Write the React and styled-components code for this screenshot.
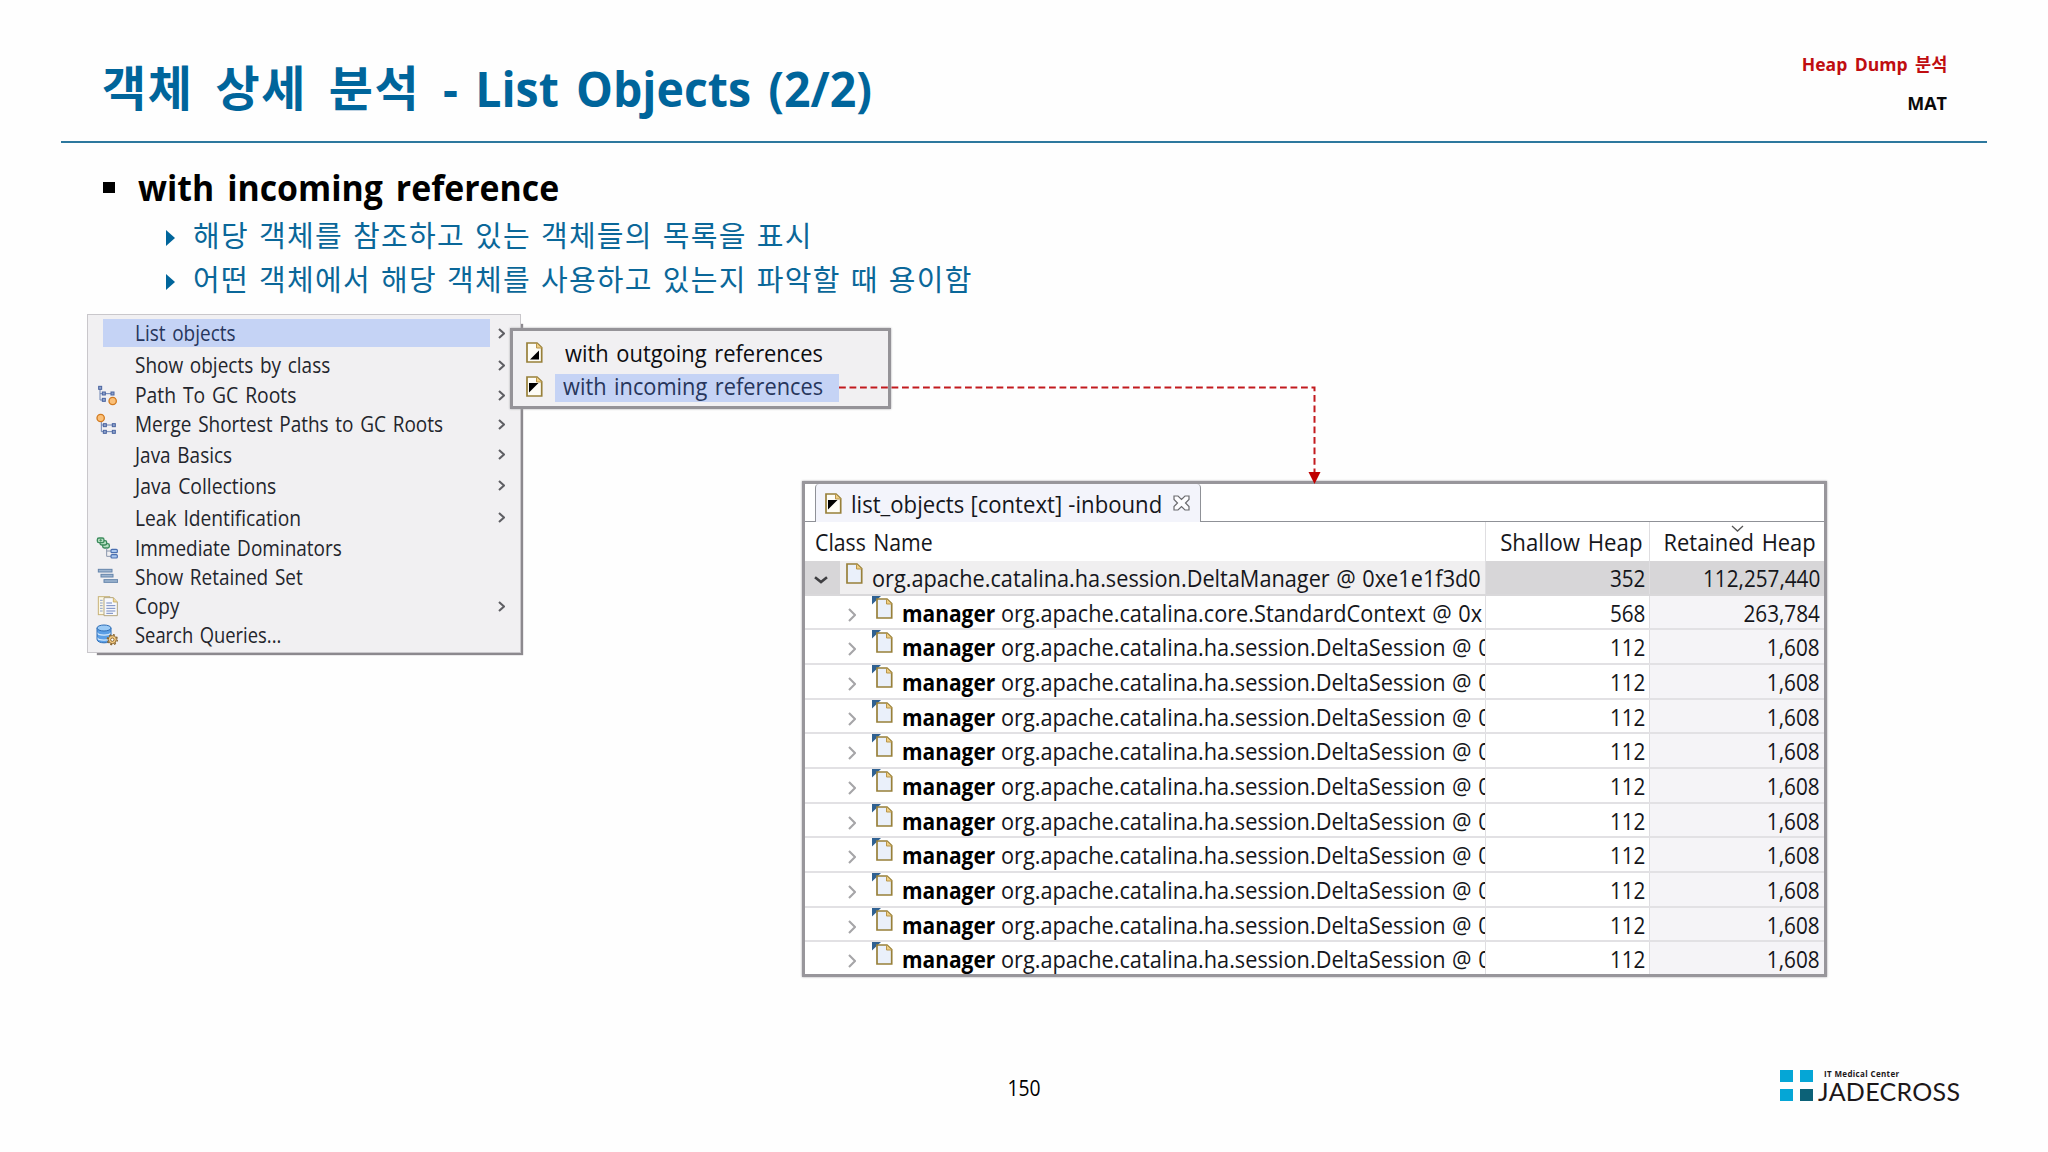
import styled, { createGlobalStyle } from 'styled-components';

const GlobalStyle = createGlobalStyle`
  * {
    box-sizing: border-box;
  }
  body {
    margin: 0;
    background: #fefefe;
    font-family: 'Open Sans', 'Noto Sans CJK KR', sans-serif;
  }
  svg {
    display: block;
    flex-shrink: 0;
  }
`;

// slightly condensed text run, with wider word gaps
const Narrow = styled.span`
  display: inline-block;
  white-space: pre;
  word-spacing: ${({ $gap }) => $gap || 0}px;
  transform: scaleX(${({ $scale }) => $scale});
  transform-origin: ${({ $origin }) => $origin || 'left'} center;
`;

const Slide = styled.main`
  width: 2048px;
  height: 1152px;
  display: flex;
  flex-direction: column;
  overflow: hidden;
  background: #fefefe;
`;

/* ---------- header ---------- */

const Header = styled.header`
  height: 143px;
  margin: 0 61px;
  padding: 45px 40px 0 41px;
  display: flex;
  justify-content: space-between;
  align-items: flex-start;
  border-bottom: 2px solid #2d789e;
`;

const Title = styled.h1`
  margin: 0;
  padding-top: 3px;
  display: flex;
  color: #00659b;
  font-size: 49px;
  font-weight: 700;
  line-height: 80px;
  white-space: pre;
`;

const TitleKorean = styled.span`
  margin-right: 1px;
  font-size: 48px;
  letter-spacing: 1.6px;
  word-spacing: 7.8px;
`;

const Tags = styled.div`
  text-align: right;
  font-size: 18px;
  font-weight: 700;
  line-height: 39px;
`;

const Tag = styled.div`
  color: ${({ $color }) => $color};
`;

/* ---------- bullets ---------- */

const Bullets = styled.section`
  padding: 19px 0 0 103px;
`;

const Heading = styled.h2`
  margin: 0;
  height: 51px;
  display: flex;
  align-items: center;
  gap: 23px;
  font-size: 36px;
  font-weight: 700;
  line-height: 51px;
  color: #000;
`;

const Square = styled.span`
  width: 12px;
  height: 11px;
  background: #000;
`;

const SubItem = styled.p`
  margin: 0;
  padding: 1px 0 0 63px;
  height: 44px;
  display: flex;
  align-items: center;
  gap: 18px;
  color: #0a6799;
  font-size: 29px;
  line-height: 44px;
  letter-spacing: 1.3px;
  word-spacing: 1.2px;
`;

const Pointer = styled.span`
  margin-top: 5px;
  border-left: 9px solid #00659b;
  border-top: 8.5px solid transparent;
  border-bottom: 8.5px solid transparent;
`;

/* ---------- stage ---------- */

const Stage = styled.section`
  position: relative;
  flex: 0 0 757px;
  padding: 13px 0 0 87px;
  display: flex;
  align-items: flex-start;
`;

const Menu = styled.div`
  position: relative;
  width: 434px;
  height: 339px;
  padding-top: 2px;
  background: #f1f0f2;
  border: 1px solid #c9c7cb;
  box-shadow: 6px 6px 1px -4px #8c898e;
`;

const MenuItem = styled.div`
  height: ${({ $height }) => $height}px;
  display: grid;
  grid-template-columns: 15px 387px 1fr;
  align-items: center;
  color: #23252c;
`;

const MenuIcon = styled.div`
  width: 22px;
  padding-left: 8px;
`;

const MenuLabel = styled.div`
  height: 28px;
  padding-left: 32px;
  font-size: 21px;
  line-height: 29px;
  background: ${({ $active }) => ($active ? '#c5d3f5' : 'transparent')};
  color: ${({ $active }) => ($active ? '#27365c' : 'inherit')};
`;

const MenuArrow = styled.div`
  padding-left: 8px;
`;

const Submenu = styled.div`
  position: absolute;
  left: 422px;
  top: 13px;
  width: 381px;
  height: 81px;
  padding: 6px 0 0 13px;
  background: #f1f0f2;
  border: 3px solid #959398;
  box-shadow: 0 0 2px #a9a7ab;
`;

const SubmenuItem = styled.div`
  height: 34px;
  display: flex;
  align-items: center;
  gap: 12px;

  svg {
    margin-bottom: 3px;
  }
`;

const SubmenuLabel = styled.div`
  width: 284px;
  height: 28px;
  padding-left: ${({ $active }) => ($active ? 8 : 10)}px;
  font-size: 23px;
  line-height: ${({ $active }) => ($active ? 24 : 26)}px;
  background: ${({ $active }) => ($active ? '#c5d3f5' : 'transparent')};
  color: ${({ $active }) => ($active ? '#27365c' : '#0c0c10')};
`;

const Connector = styled.svg`
  position: absolute;
  left: 839px;
  top: 79px;
`;

/* ---------- result window ---------- */

const Window = styled.div`
  width: 1025px;
  height: 496px;
  margin: 167px 0 0 281px;
  overflow: hidden;
  background: #fff;
  border: 3px solid #98969b;
  box-shadow: 0 0 2px #a5a3a8;
  color: #15161b;
  font-size: 23px;
`;

const TabBar = styled.div`
  height: 38px;
  display: flex;

  &::before {
    content: '';
    width: 10px;
    border-bottom: 1px solid #8f9197;
  }

  &::after {
    content: '';
    flex: 1;
    border-bottom: 1px solid #8f9197;
  }
`;

const Tab = styled.div`
  width: 386px;
  padding-left: 9px;
  display: flex;
  align-items: center;
  background: #f3f4fb;
  border: 1px solid #8f9197;
  border-width: 0 1px;
  border-radius: 4px 4px 0 0;
`;

const TabText = styled.span`
  width: 331px;
  height: 38px;
  padding-left: 9px;
  line-height: 40px;
`;

const Columns = styled.div`
  display: grid;
  grid-template-columns: 681px 164px 174px;
  grid-template-rows: 100%;
`;

const HeadRow = styled(Columns)`
  height: 39px;
  line-height: 41px;
`;

const HeadCell = styled.div`
  position: relative;
  padding: 0 ${({ $right }) => $right || 0}px 0 ${({ $left }) => $left || 0}px;
  text-align: ${({ $right }) => ($right ? 'right' : 'left')};
  border-right: ${({ $last }) => ($last ? 0 : 1)}px solid #dfdee1;
`;

const SortMark = styled.svg`
  position: absolute;
  left: 81px;
  top: 3px;
`;

const Row = styled(Columns)`
  height: 34.67px;
  line-height: 34px;
  border-bottom: 2px solid ${({ $selected }) => ($selected ? '#d9d8da' : '#e2e1e4')};
  background: ${({ $selected }) => ($selected ? '#d7d6d8' : '#fff')};
`;

const NameCell = styled.div`
  display: flex;
  min-width: 0;
  overflow: hidden;
  white-space: nowrap;
  border-right: 1px solid #dfdee1;
  background: ${({ $selected }) => ($selected ? '#f0eff0' : '#fff')};
`;

const Twistie = styled.div`
  flex: 0 0 ${({ $open }) => ($open ? 35 : 67)}px;
  padding: ${({ $open }) => ($open ? '15px 0 0 9px' : '12px 0 0 43px')};
  background: ${({ $open }) => ($open ? '#d7d6d8' : 'transparent')};
`;

const RowIcon = styled.div`
  padding: ${({ $root }) => ($root ? '2px 9px 0 6px' : '0 9px 0 0')};
`;

const FieldName = styled.b`
  width: 99px;
  flex-shrink: 0;
  color: #000;
`;

const NumberCell = styled.div`
  padding-right: 4px;
  text-align: right;
  border-right: ${({ $retained }) => ($retained ? 0 : 1)}px solid #dfdee1;
  background: ${({ $retained, $selected }) => ($retained && !$selected ? '#f5f4f7' : 'transparent')};
`;

/* ---------- footer ---------- */

const Footer = styled.footer`
  height: 60px;
  padding: 0 88px;
  display: grid;
  grid-template-columns: 1fr auto 1fr;
  align-items: center;
`;

const PageNumber = styled.span`
  grid-column: 2;
  font-size: 21px;
  line-height: 28px;
  color: #000;
`;

const Logo = styled.div`
  justify-self: end;
  width: 180px;
  height: 36px;
  display: flex;
  gap: 5px;
`;

const LogoText = styled.div`
  display: flex;
  flex-direction: column;
  white-space: nowrap;
  color: #1c1719;
`;

const LogoTagline = styled.span`
  padding-left: 6px;
  font-size: 8px;
  font-weight: 700;
  line-height: 8px;
  letter-spacing: 0.35px;
`;

const LogoName = styled.span`
  font-family: Lato, sans-serif;
  font-size: 25px;
  line-height: 26px;
  letter-spacing: 0.3px;
`;

/* ---------- icons ---------- */

const Node = ({ x, y }) => (
  <rect x={x} y={y} width="9" height="9" fill="#8fa3cc" stroke="#4a64a0" strokeWidth="3" />
);

const PathIcon = () => (
  <svg width="22" height="22" viewBox="0 0 66 66">
    <path d="M12 14V48H24M12 29H48" fill="none" stroke="#6d84b5" strokeWidth="3" />
    <Node x={8} y={7} />
    <Node x={19} y={24} />
    <Node x={45} y={24} />
    <Node x={19} y={43} />
    <circle cx="50" cy="51" r="11" fill="#fbc078" stroke="#d27b22" strokeWidth="4" />
  </svg>
);

const MergeIcon = () => (
  <svg width="22" height="22" viewBox="0 0 66 66">
    <path d="M16 20V56H54M16 36H54" fill="none" stroke="#6d84b5" strokeWidth="3" />
    <Node x={22} y={32} />
    <Node x={49} y={32} />
    <Node x={22} y={52} />
    <Node x={49} y={52} />
    <circle cx="14" cy="15" r="11" fill="#fbc078" stroke="#d27b22" strokeWidth="4" />
  </svg>
);

const DominatorsIcon = () => (
  <svg width="22" height="22" viewBox="0 0 66 66">
    <g fill="#b7e0c2" stroke="#3c8b5c" strokeWidth="4">
      <rect x="20" y="20" width="20" height="13" rx="5" />
      <rect x="12" y="11" width="20" height="13" rx="5" />
      <rect x="4" y="3" width="20" height="14" rx="5" />
    </g>
    <path d="M14 6v8M10 10h8" stroke="#3c8b5c" strokeWidth="2.5" />
    <path d="M32 34V58H48M32 42H48" fill="none" stroke="#8a96ac" strokeWidth="3" />
    <g fill="#a9c6ef" stroke="#4a6fb0" strokeWidth="3.5">
      <rect x="45" y="37" width="19" height="10" rx="3" />
      <rect x="45" y="53" width="19" height="10" rx="3" />
    </g>
  </svg>
);

const RetainedIcon = () => (
  <svg width="22" height="22" viewBox="0 0 66 66">
    <g fill="#9db4cf" stroke="#6484ab" strokeWidth="3">
      <rect x="7" y="10" width="41" height="8" />
      <rect x="15" y="25" width="36" height="8" />
      <rect x="24" y="41" width="41" height="8" />
    </g>
  </svg>
);

const CopyIcon = () => (
  <svg width="22" height="22" viewBox="0 0 66 66">
    <rect x="7" y="5" width="34" height="54" fill="#fbf7e6" stroke="#c8b377" strokeWidth="3" />
    <path d="M12 16h8M12 24h8M12 32h8M12 40h8M12 48h8" stroke="#8fa2c8" strokeWidth="3" />
    <path d="M24 8H52L64 21V62H24Z" fill="#f7f8fd" stroke="#b3a57e" strokeWidth="3" />
    <path d="M52 8V21H64" fill="#efd89a" stroke="#c8a95a" strokeWidth="2.5" />
    <path d="M31 24h17M31 32h27M31 40h27M31 48h27M31 55h20" stroke="#7389c0" strokeWidth="3" />
  </svg>
);

const SearchIcon = () => (
  <svg width="22" height="22" viewBox="0 0 66 66">
    <path d="M3 12V46C3 60 45 60 45 46V12Z" fill="#5b9fe6" />
    <path d="M3 25C6 36 42 36 45 25M3 40C6 51 42 51 45 40" fill="none" stroke="#d5e9fb" strokeWidth="4" />
    <path d="M3 12V46C3 60 45 60 45 46V12" fill="none" stroke="#2f6fb8" strokeWidth="3" />
    <ellipse cx="24" cy="12" rx="21" ry="9" fill="#9ccbf6" stroke="#2f6fb8" strokeWidth="3" />
    <circle cx="49" cy="47" r="15" fill="none" stroke="#8a6630" strokeWidth="4" strokeDasharray="6 5.8" />
    <circle cx="49" cy="47" r="12" fill="#f6cd85" stroke="#8a6630" strokeWidth="3" />
    <circle cx="49" cy="47" r="5" fill="#fff" stroke="#8a6630" strokeWidth="3" />
  </svg>
);

const MARKS = {
  incoming: 'M3 7H12.5L3 16.5Z',
  outgoing: 'M13 8.5V17.5H4Z',
};

const PageIcon = ({ mark }) => (
  <svg width="17" height="21" viewBox="0 0 17 21">
    <path d="M1 1H11L15.7 5.7V20H1Z" fill="#fdfcf6" stroke="#98803a" strokeWidth="1.7" />
    <path d="M10.5 1V6H15.7" fill="#f0cf83" stroke="#b8954a" strokeWidth="1" />
    <path d={MARKS[mark]} fill="#000" />
  </svg>
);

const ObjectIcon = ({ child }) => (
  <svg width={child ? 21 : 17} height={child ? 24 : 21} viewBox={child ? '-4 -2 21 24' : '0 0 17 21'}>
    {child && <path d="M-4 -2H5L-4 6.5Z" fill="#2f6192" />}
    <path d="M1 1H11L15.7 5.7V20H1Z" fill="#eaf0fa" stroke="#98803a" strokeWidth="1.7" />
    <path d="M10.5 1V6H15.7" fill="#f0cf83" stroke="#b8954a" strokeWidth="1" />
  </svg>
);

const CloseIcon = () => (
  <svg width="17" height="16" viewBox="0 0 17 16">
    <path
      d="M1 1H5L8.5 4.5L12 1H16V4.5L12.5 8L16 11.5V15H12L8.5 11.5L5 15H1V11.5L4.5 8L1 4.5Z"
      fill="#fdfdff"
      stroke="#6a6a6e"
      strokeWidth="1.2"
    />
  </svg>
);

const Chevron = ({ width, height, color }) => (
  <svg width={width} height={height} viewBox={`0 0 ${width} ${height}`}>
    <path
      d={`M1 1L${width - 1} ${height / 2}L1 ${height - 1}`}
      fill="none"
      stroke={color}
      strokeWidth="2.1"
    />
  </svg>
);

const DownChevron = () => (
  <svg width="14" height="8" viewBox="0 0 14 8">
    <path d="M1 1.2L7 6L13 1.2" fill="none" stroke="#3f3f42" strokeWidth="2.6" />
  </svg>
);

const LogoMark = () => (
  <svg width="33" height="36" viewBox="0 0 33 36">
    <rect x="0" y="0" width="13" height="12" fill="#05a6d6" />
    <rect x="20" y="0" width="13" height="12" fill="#05a6d6" />
    <rect x="0" y="19" width="13" height="12" fill="#05a6d6" />
    <rect x="20" y="19" width="13" height="12" fill="#0c6177" />
  </svg>
);

/* ---------- data ---------- */

const menuItems = [
  { label: 'List objects', height: 32, arrow: true, active: true },
  { label: 'Show objects by class', height: 32, arrow: true },
  { label: 'Path To GC Roots', height: 28, arrow: true, icon: <PathIcon />, scale: 0.92 },
  { label: 'Merge Shortest Paths to GC Roots', height: 30, arrow: true, icon: <MergeIcon /> },
  { label: 'Java Basics', height: 31, arrow: true },
  { label: 'Java Collections', height: 31, arrow: true, scale: 0.92 },
  { label: 'Leak Identification', height: 33, arrow: true, scale: 0.915 },
  { label: 'Immediate Dominators', height: 28, icon: <DominatorsIcon /> },
  { label: 'Show Retained Set', height: 30, icon: <RetainedIcon /> },
  { label: 'Copy', height: 28, arrow: true, icon: <CopyIcon /> },
  { label: 'Search Queries...', height: 29, icon: <SearchIcon />, scale: 0.875 },
];

const rows = [
  { name: 'org.apache.catalina.ha.session.DeltaManager @ 0xe1e1f3d0', shallow: '352', retained: '112,257,440', root: true },
  { name: 'org.apache.catalina.core.StandardContext @ 0x', shallow: '568', retained: '263,784' },
  ...Array.from({ length: 10 }, () => ({
    name: 'org.apache.catalina.ha.session.DeltaSession @ 0',
    shallow: '112',
    retained: '1,608',
  })),
];

function ContextMenu() {
  return (
    <Menu>
      {menuItems.map((item) => (
        <MenuItem key={item.label} $height={item.height}>
          <MenuIcon>{item.icon}</MenuIcon>
          <MenuLabel $active={item.active}>
            <Narrow $scale={item.scale || 0.903} $gap={2}>{item.label}</Narrow>
          </MenuLabel>
          <MenuArrow>{item.arrow && <Chevron width={7} height={11} color="#5f5f64" />}</MenuArrow>
        </MenuItem>
      ))}
      <Submenu>
        <SubmenuItem>
          <PageIcon mark="outgoing" />
          <SubmenuLabel>
            <Narrow $scale={0.952} $gap={2}>with outgoing references</Narrow>
          </SubmenuLabel>
        </SubmenuItem>
        <SubmenuItem>
          <PageIcon mark="incoming" />
          <SubmenuLabel $active>
            <Narrow $scale={0.947} $gap={2}>with incoming references</Narrow>
          </SubmenuLabel>
        </SubmenuItem>
      </Submenu>
    </Menu>
  );
}

function ResultWindow() {
  return (
    <Window>
      <TabBar>
        <Tab>
          <PageIcon mark="incoming" />
          <TabText>
            <Narrow $scale={0.962} $gap={0.5}>list_objects [context] -inbound</Narrow>
          </TabText>
          <CloseIcon />
        </Tab>
      </TabBar>
      <HeadRow>
        <HeadCell $left={10}>
          <Narrow $scale={0.925} $gap={2}>Class Name</Narrow>
        </HeadCell>
        <HeadCell $right={7}>
          <Narrow $scale={0.965} $gap={2} $origin="right">Shallow Heap</Narrow>
        </HeadCell>
        <HeadCell $right={8} $last>
          <Narrow $scale={0.953} $gap={2} $origin="right">Retained Heap</Narrow>
          <SortMark width="13" height="7" viewBox="0 0 13 7">
            <path d="M1 1L6.5 6L12 1" fill="none" stroke="#555" strokeWidth="1.3" />
          </SortMark>
        </HeadCell>
      </HeadRow>
      {rows.map((row, index) => (
        <Row key={index} $selected={row.root}>
          <NameCell $selected={row.root}>
            <Twistie $open={row.root}>
              {row.root ? <DownChevron /> : <Chevron width={8} height={14} color="#a6a5a8" />}
            </Twistie>
            <RowIcon $root={row.root}>
              <ObjectIcon child={!row.root} />
            </RowIcon>
            {!row.root && (
              <FieldName>
                <Narrow $scale={0.91}>manager</Narrow>
              </FieldName>
            )}
            <Narrow $scale={0.944} $gap={1}>{row.name}</Narrow>
          </NameCell>
          <NumberCell $selected={row.root}>
            <Narrow $scale={0.9} $origin="right">{row.shallow}</Narrow>
          </NumberCell>
          <NumberCell $selected={row.root} $retained>
            <Narrow $scale={0.9} $origin="right">{row.retained}</Narrow>
          </NumberCell>
        </Row>
      ))}
    </Window>
  );
}

export default function App() {
  return (
    <Slide>
      <GlobalStyle />
      <Header>
        <Title>
          <TitleKorean>객체 상세 분석 </TitleKorean>
          <Narrow $scale={0.947} $gap={5.5}>- List Objects (2/2)</Narrow>
        </Title>
        <Tags>
          <Tag $color="#c00d10">
            <Narrow $scale={0.975} $gap={3} $origin="right">Heap Dump 분석</Narrow>
          </Tag>
          <Tag $color="#0a0a0a">MAT</Tag>
        </Tags>
      </Header>

      <Bullets>
        <Heading>
          <Square />
          <Narrow $scale={0.939} $gap={4.5}>with incoming reference</Narrow>
        </Heading>
        <SubItem>
          <Pointer />
          해당 객체를 참조하고 있는 객체들의 목록을 표시
        </SubItem>
        <SubItem>
          <Pointer />
          어떤 객체에서 해당 객체를 사용하고 있는지 파악할 때 용이함
        </SubItem>
      </Bullets>

      <Stage>
        <ContextMenu />
        <ResultWindow />
        <Connector width="490" height="106" viewBox="0 0 490 106">
          <path d="M0 7.5H475.5V94" fill="none" stroke="#c21a1e" strokeWidth="2" strokeDasharray="6.8 3.7" />
          <path d="M469.5 92H481.5L475.5 104Z" fill="#c00000" />
        </Connector>
      </Stage>

      <Footer>
        <PageNumber>
          <Narrow $scale={0.92} $origin="center">150</Narrow>
        </PageNumber>
        <Logo>
          <LogoMark />
          <LogoText>
            <LogoTagline>IT Medical Center</LogoTagline>
            <LogoName>JADECROSS</LogoName>
          </LogoText>
        </Logo>
      </Footer>
    </Slide>
  );
}
